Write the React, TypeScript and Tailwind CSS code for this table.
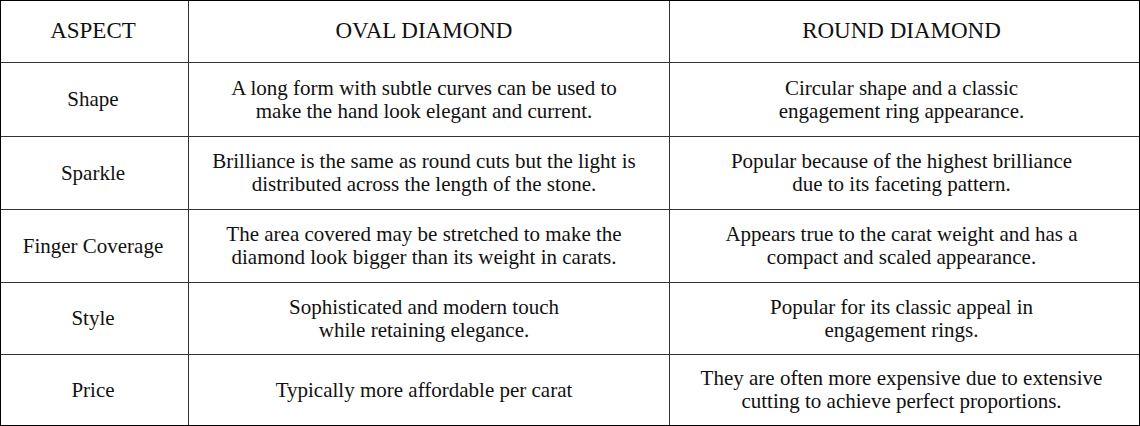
const HEAD = ['ASPECT', 'OVAL DIAMOND', 'ROUND DIAMOND']

// small right padding per column so text sits where the reference has it
const PAD = ['pr-[3px]', 'pr-[10px]', 'pr-[6px]']

const ROWS: { h: string; cells: string[][] }[] = [
  {
    h: 'h-[74px]',
    cells: [
      ['Shape'],
      ['A long form with subtle curves can be used to', 'make the hand look elegant and current.'],
      ['Circular shape and a classic', 'engagement ring appearance.'],
    ],
  },
  {
    h: 'h-[73px]',
    cells: [
      ['Sparkle'],
      ['Brilliance is the same as round cuts but the light is', 'distributed across the length of the stone.'],
      ['Popular because of the highest brilliance', 'due to its faceting pattern.'],
    ],
  },
  {
    h: 'h-[73px]',
    cells: [
      ['Finger Coverage'],
      ['The area covered may be stretched to make the', 'diamond look bigger than its weight in carats.'],
      ['Appears true to the carat weight and has a', 'compact and scaled appearance.'],
    ],
  },
  {
    h: 'h-[72px]',
    cells: [
      ['Style'],
      ['Sophisticated and modern touch', 'while retaining elegance.'],
      ['Popular for its classic appeal in', 'engagement rings.'],
    ],
  },
  {
    h: 'h-[70px]',
    cells: [
      ['Price'],
      ['Typically more affordable per carat'],
      ['They are often more expensive due to extensive', 'cutting to achieve perfect proportions.'],
    ],
  },
]

export default function App() {
  return (
    <div className="w-[1140px] h-[426px] bg-white" style={{ fontFamily: '"Liberation Serif", "Times New Roman", serif' }}>
      <div className="border border-black grid grid-cols-[188px_481px_469px] text-[#111]">
        {HEAD.map((t, i) => (
          <div
            key={t}
            className={`h-[62px] flex items-center justify-center text-[23px] border-b border-[#333] ${PAD[i]} ${i < 2 ? 'border-r' : ''}`}
          >
            {t}
          </div>
        ))}
        {ROWS.map((row, r) =>
          row.cells.map((lines, i) => (
            <div
              key={`${r}-${i}`}
              className={`${row.h} flex flex-col items-center justify-center text-center text-[21px] leading-[23px] border-[#333] ${PAD[i]} ${i < 2 ? 'border-r' : ''} ${r < ROWS.length - 1 ? 'border-b' : ''}`}
            >
              {lines.map((l) => (
                <span key={l}>{l}</span>
              ))}
            </div>
          ))
        )}
      </div>
    </div>
  )
}
